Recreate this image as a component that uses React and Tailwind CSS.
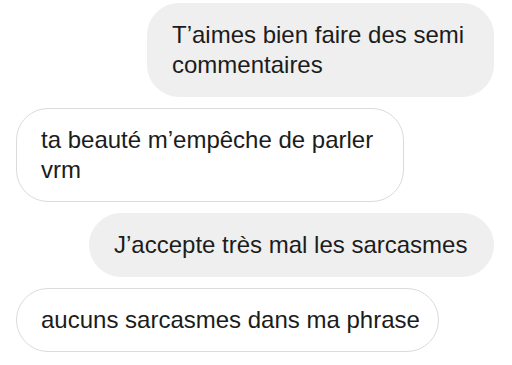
import React from "react";

const messages = [
  { mine: true, text: "T’aimes bien faire des semi commentaires", width: "w-[347px]" },
  { mine: false, text: "ta beauté m’empêche de parler vrm", width: "w-[388px]" },
  { mine: true, text: "J’accepte très mal les sarcasmes", width: "w-[405px] whitespace-nowrap" },
  { mine: false, text: "aucuns sarcasmes dans ma phrase", width: "w-[423px] whitespace-nowrap" },
];

function Bubble({ mine, text, width }) {
  const look = mine
    ? "self-end bg-[#efefef] border border-[#efefef]"
    : "self-start bg-white border border-[#dbdbdb]";
  return (
    <div
      className={`${look} ${width} rounded-[32px] px-6 py-4 text-[24px] leading-[30px] text-[#1c1c1c]`}
    >
      {text}
    </div>
  );
}

export default function App() {
  return (
    <div
      className="w-[512px] h-[365px] bg-white flex flex-col gap-[11px] pt-[3px] pl-4 pr-[18px] overflow-hidden"
      style={{ fontFamily: '"Liberation Sans", Arial, sans-serif' }}
    >
      {messages.map((m, i) => (
        <Bubble key={i} {...m} />
      ))}
    </div>
  );
}
